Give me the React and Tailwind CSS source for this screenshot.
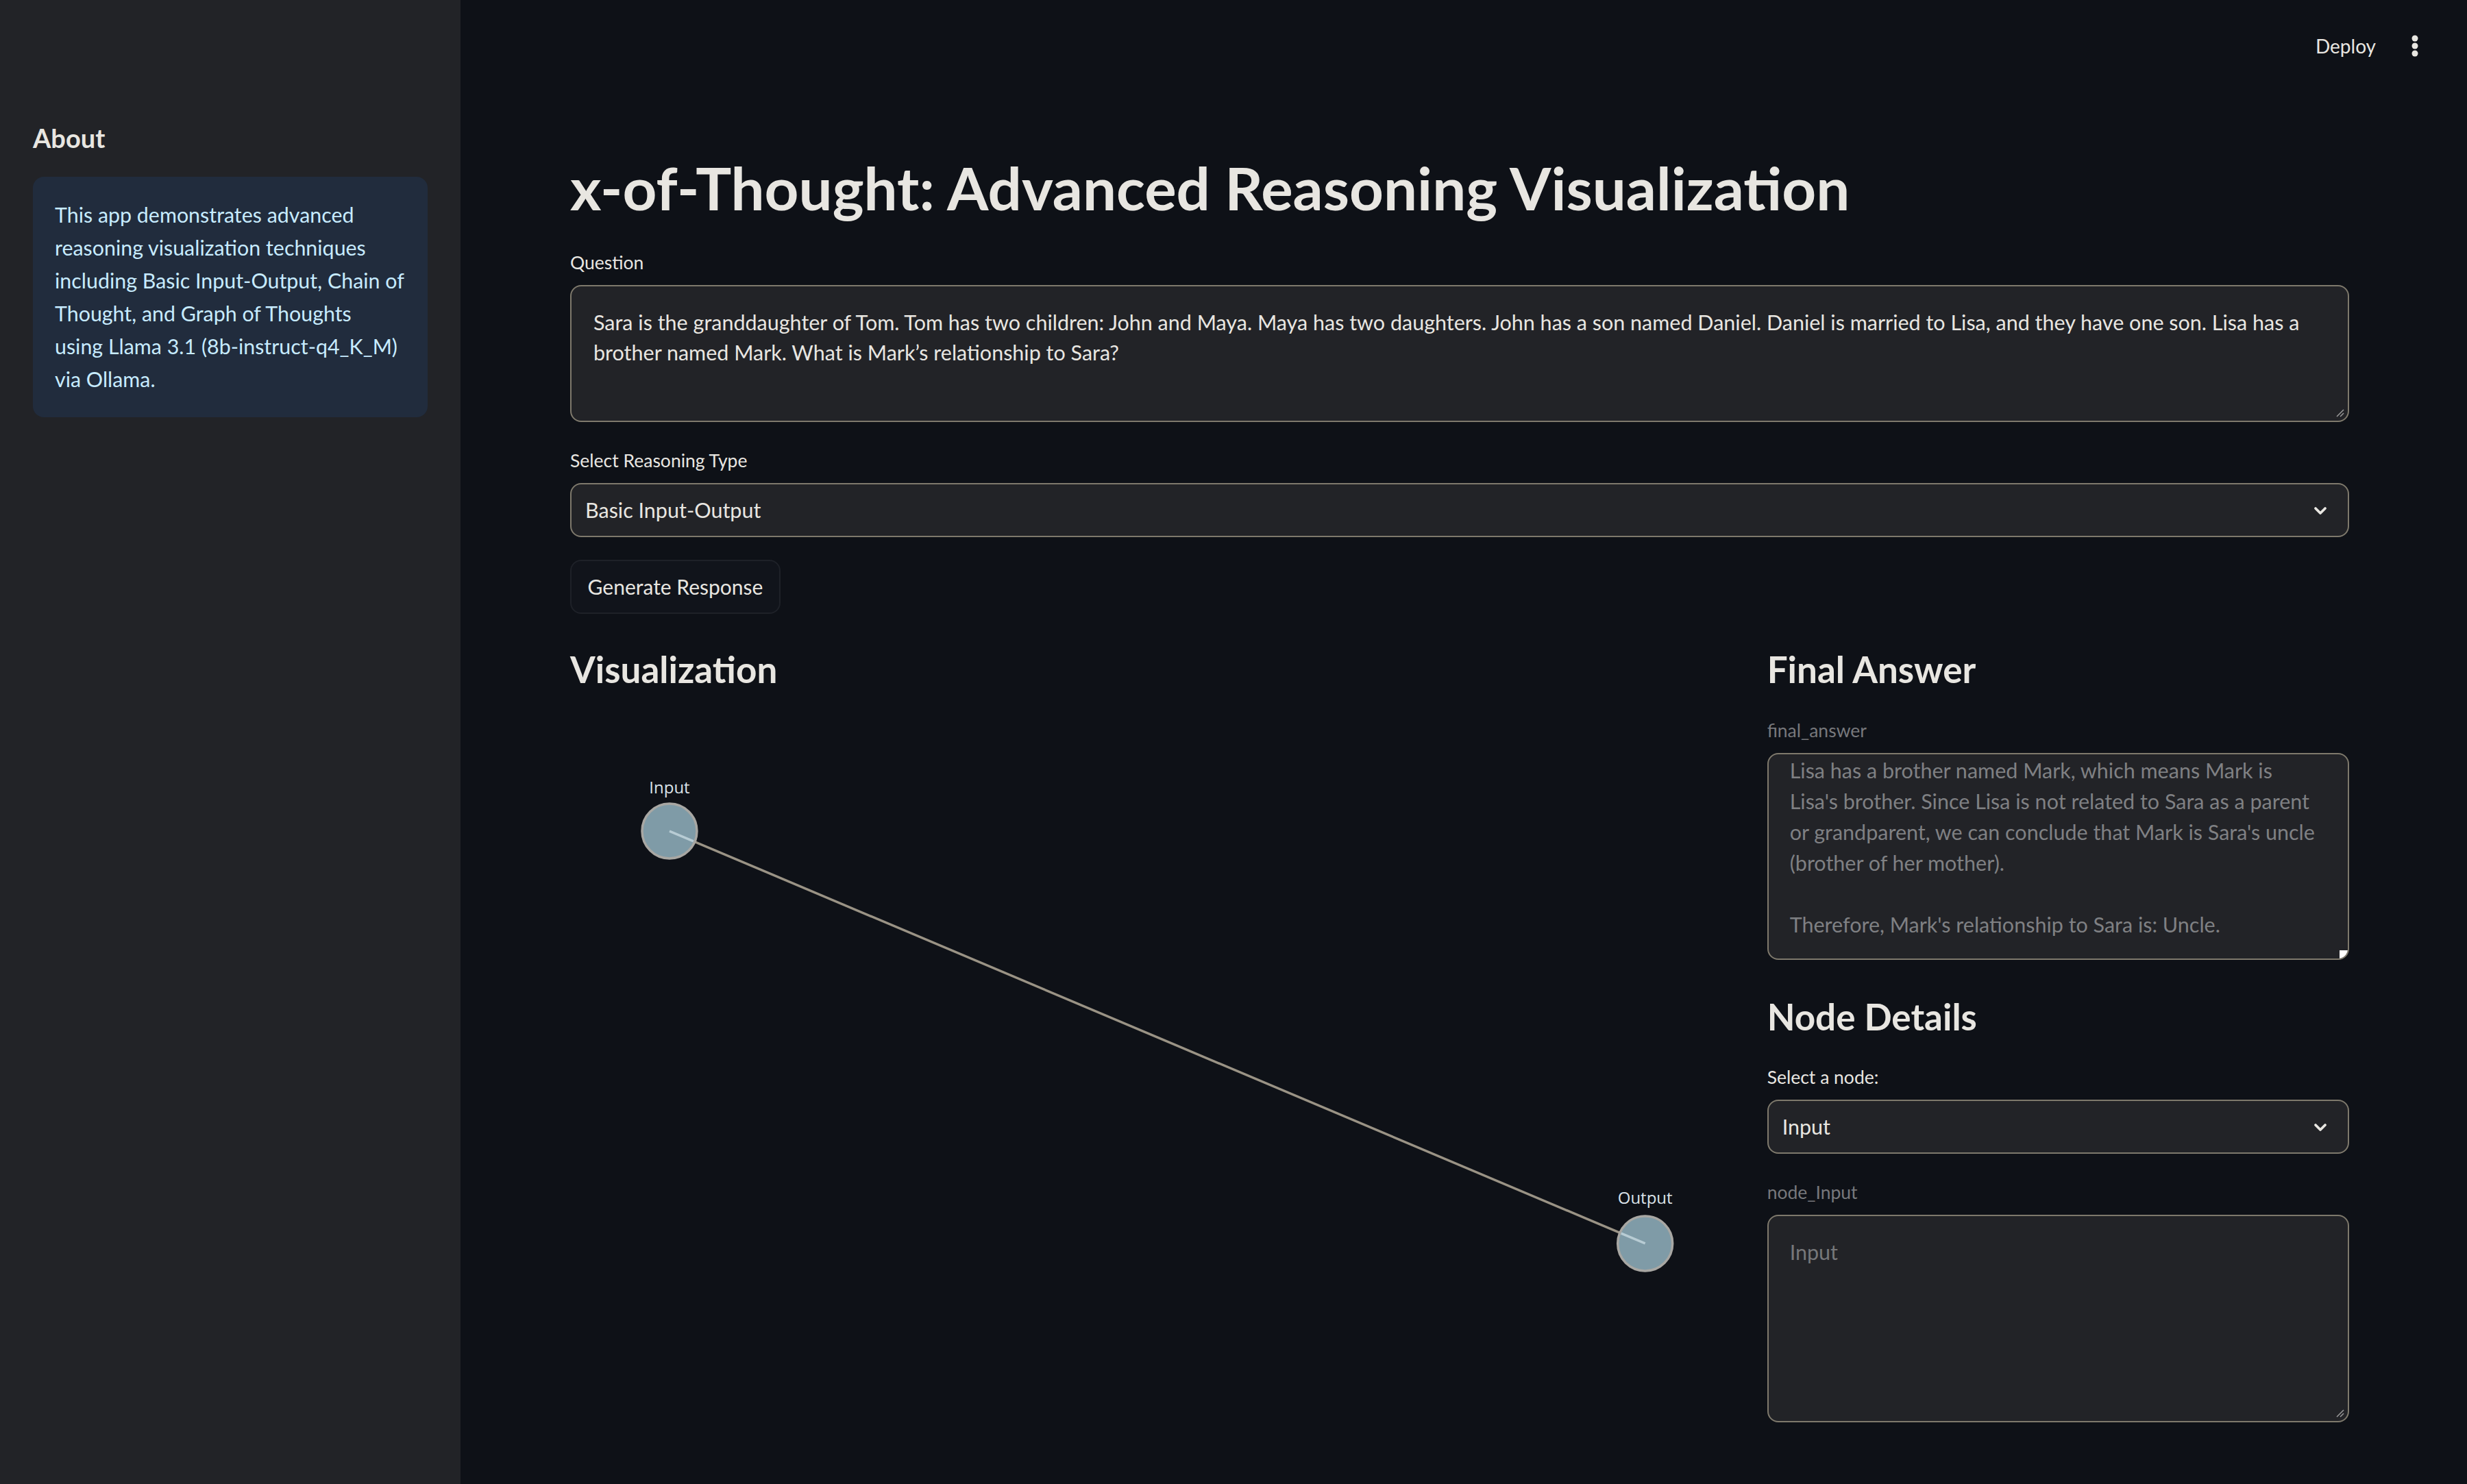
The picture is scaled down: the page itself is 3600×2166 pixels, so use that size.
import React from "react";

const font = { fontFamily: "Lato, 'Noto Sans', sans-serif" };

function Chevron() {
  return (
    <svg width="24" height="24" viewBox="0 0 24 24" className="shrink-0" aria-hidden>
      <path d="M5 9 L12 16 L19 9" fill="none" stroke="#e8e6e1" strokeWidth="3.8" strokeLinecap="round" strokeLinejoin="round" />
    </svg>
  );
}

function Grip() {
  return (
    <svg width="16" height="16" viewBox="0 0 16 16" className="absolute bottom-[4px] right-[4px]" aria-hidden>
      <path d="M4 14 L14 4 M9 14 L14 9" stroke="#9b9b9b" strokeWidth="1.5" />
    </svg>
  );
}

function Label({ children, dim }) {
  return (
    <div className={`h-[36px] text-[26.5px] leading-[36px] mb-[15px] ${dim ? "text-[#77787c]" : "text-[#e8e6e1]"}`}>
      {children}
    </div>
  );
}

function SelectBox({ value }) {
  return (
    <div className="flex h-[79px] items-center justify-between rounded-[16px] border-2 border-[#7e796c] bg-[#222327] pl-[20px] pr-[28px] text-[30.5px] text-[#e8e6e1]">
      <span>{value}</span>
      <Chevron />
    </div>
  );
}

function Graph() {
  const a = { x: 145, y: 201 };
  const b = { x: 1569, y: 803 };
  const r = 40;
  const dx = b.x - a.x;
  const dy = b.y - a.y;
  const len = Math.hypot(dx, dy);
  const ux = dx / len;
  const uy = dy / len;
  return (
    <svg width="100%" height="940" viewBox="0 0 1699 940" className="block">
      <line x1={a.x} y1={a.y} x2={b.x} y2={b.y} stroke="#9a9385" strokeWidth="3.5" />
      {[a, b].map((n, i) => (
        <circle key={i} cx={n.x} cy={n.y} r={r} fill="#7f9ba7" stroke="#a8a7a3" strokeWidth="3.5" />
      ))}
      <line x1={a.x} y1={a.y} x2={a.x + ux * (r - 2)} y2={a.y + uy * (r - 2)} stroke="#b8ccd4" strokeWidth="3.5" />
      <line x1={b.x} y1={b.y} x2={b.x - ux * (r - 2)} y2={b.y - uy * (r - 2)} stroke="#b8ccd4" strokeWidth="3.5" />
      <text x={a.x} y={146} textAnchor="middle" fontSize="24" fill="#dbe2e9" style={{ fontFamily: "'Open Sans', sans-serif" }}>
        Input
      </text>
      <text x={b.x} y={745} textAnchor="middle" fontSize="24" fill="#dbe2e9" style={{ fontFamily: "'Open Sans', sans-serif" }}>
        Output
      </text>
    </svg>
  );
}

export default function App() {
  const infoLines = [
    "This app demonstrates advanced",
    "reasoning visualization techniques",
    "including Basic Input-Output, Chain of",
    "Thought, and Graph of Thoughts",
    "using Llama 3.1 (8b-instruct-q4_K_M)",
    "via Ollama.",
  ];
  const answerLines = [
    "Lisa has a brother named Mark, which means Mark is",
    "Lisa's brother. Since Lisa is not related to Sara as a parent",
    "or grandparent, we can conclude that Mark is Sara's uncle",
    "(brother of her mother).",
    "\u00a0",
    "Therefore, Mark's relationship to Sara is: Uncle.",
  ];

  return (
    <div className="flex min-h-screen w-full bg-[#0e1117] text-[#e8e6e1]" style={font}>
      {/* sidebar */}
      <aside className="w-[672px] shrink-0 bg-[#222327] px-[48px] pt-[177px]">
        <h2 className="h-[48px] text-[38px] font-bold leading-[48px] text-[#e8e6e1]">About</h2>
        <div className="mt-[33px] rounded-[16px] bg-[#212c3d] px-[32px] pb-[32px] pt-[31px] text-[30.4px] leading-[48px] text-[#c7ebff]">
          {infoLines.map((l) => (
            <div key={l} className="whitespace-nowrap">
              {l}
            </div>
          ))}
        </div>
      </aside>

      {/* main */}
      <main className="min-w-0 flex-1">
        <header className="flex h-[134px] items-center justify-end pr-[64px]">
          <span className="text-[28px] text-[#e8e6e1]">Deploy</span>
          <svg width="24" height="40" viewBox="0 0 24 40" className="ml-[45px]" aria-hidden>
            <circle cx="12" cy="9" r="4.5" fill="#e8e6e1" />
            <circle cx="12" cy="20" r="4.5" fill="#e8e6e1" />
            <circle cx="12" cy="31" r="4.5" fill="#e8e6e1" />
          </svg>
        </header>

        <div className="pl-[160px] pr-[172px]">
          <h1 className="mt-[90px] h-[100px] text-[87px] font-bold leading-[100px] text-[#e8e6e1]">
            x-of-Thought: Advanced Reasoning Visualization
          </h1>

          <div className="mt-[41px]">
            <Label>Question</Label>
            <div className="relative h-[200px] rounded-[16px] border-2 border-[#7e796c] bg-[#222327] px-[32px] pt-[30px] text-[30.5px] leading-[44px] text-[#e8e6e1]">
              <div className="whitespace-nowrap">
                Sara is the granddaughter of Tom. Tom has two children: John and Maya. Maya has two daughters. John has a son named Daniel. Daniel is married to Lisa, and they have one son. Lisa has a
              </div>
              <div className="whitespace-nowrap">brother named Mark. What is Mark’s relationship to Sara?</div>
              <Grip />
            </div>
          </div>

          <div className="mt-[38px]">
            <Label>Select Reasoning Type</Label>
            <SelectBox value="Basic Input-Output" />
          </div>

          <button className="mt-[33px] flex h-[79px] w-[307px] items-center justify-center rounded-[16px] border-2 border-[#1e2128] bg-[#11141b] text-[30px] text-[#e8e6e1]">
            Generate Response
          </button>

          <div className="mt-[47px] grid grid-cols-[2fr_1fr] gap-[48px]">
            <div>
              <h3 className="h-[68px] text-[53px] font-bold leading-[68px]">Visualization</h3>
              <div className="mt-[1px]">
                <Graph />
              </div>
            </div>

            <div className="pb-[60px]">
              <h3 className="h-[68px] text-[53px] font-bold leading-[68px]">Final Answer</h3>
              <div className="mt-[37px]">
                <Label dim>final_answer</Label>
                <div className="relative h-[302px] overflow-hidden rounded-[16px] border-2 border-[#7e796c] bg-[#222327] px-[31px] text-[30.5px] leading-[45px] text-[#7f8083]">
                  <div className="mt-[1px]">
                    {answerLines.map((l, i) => (
                      <div key={i} className="whitespace-nowrap">
                        {l}
                      </div>
                    ))}
                  </div>
                  <div className="absolute bottom-0 right-0 h-[12px] w-[12px] bg-white" />
                </div>
              </div>

              <h3 className="mt-[49px] h-[68px] text-[53px] font-bold leading-[68px]">Node Details</h3>
              <div className="mt-[36px]">
                <Label>Select a node:</Label>
                <SelectBox value="Input" />
              </div>
              <div className="mt-[38px]">
                <Label dim>node_Input</Label>
                <div className="relative h-[303px] rounded-[16px] border-2 border-[#7e796c] bg-[#222327] px-[31px] pt-[30px] text-[30.5px] leading-[44px] text-[#76777a]">
                  Input
                  <Grip />
                </div>
              </div>
            </div>
          </div>
        </div>
      </main>
    </div>
  );
}
